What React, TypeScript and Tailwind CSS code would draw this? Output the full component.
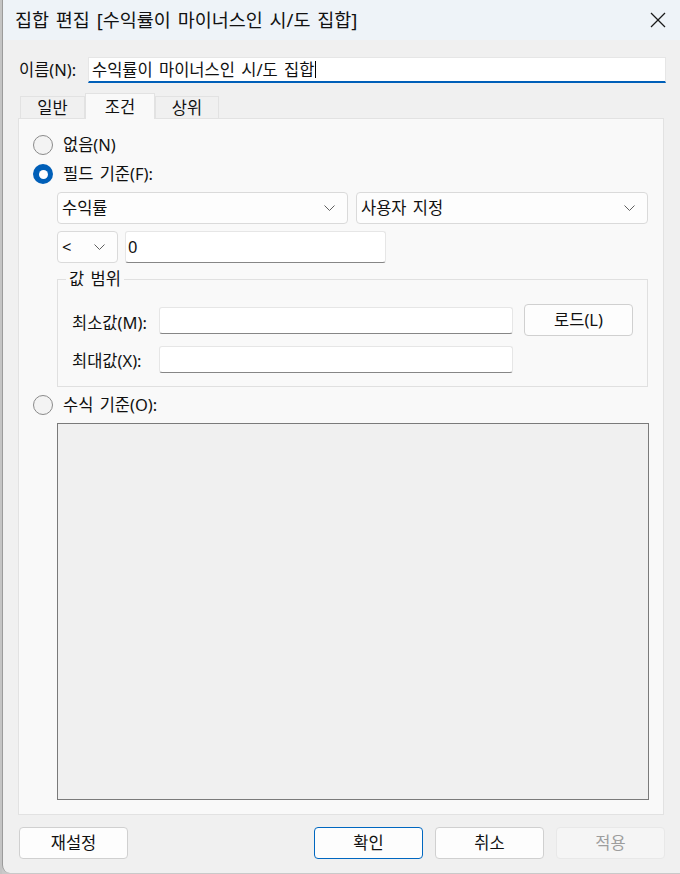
import React from "react";

const T = "text-[16.5px] leading-[20px] text-[#111] [word-spacing:2px]";

function Chevron() {
  return (
    <svg width="11" height="7" viewBox="0 0 11 7" className="shrink-0">
      <polyline points="0.5,0.5 5.5,5.5 10.5,0.5" fill="none" stroke="#5f5f5f" strokeWidth="1" />
    </svg>
  );
}

function Radio({ checked, label }: { checked?: boolean; label: string }) {
  return (
    <div className="flex items-center h-[24px]">
      {checked ? (
        <div className="w-[20px] h-[20px] rounded-full bg-[#005fb8] flex items-center justify-center shrink-0">
          <div className="w-[9px] h-[9px] rounded-full bg-white" />
        </div>
      ) : (
        <div className="w-[20px] h-[20px] rounded-full border border-[#8a8a8a] bg-[#f3f3f3] shrink-0" />
      )}
      <span className={`ml-[10px] ${T}`}>{label}</span>
    </div>
  );
}

function Combo({ text, w }: { text: string; w: string }) {
  return (
    <div
      className={`${w} h-[32px] bg-[#fdfdfd] border border-[#dadada] rounded-[4px] flex items-center justify-between pl-[4px] pr-[12px]`}
    >
      <span className={T}>{text}</span>
      <Chevron />
    </div>
  );
}

function Btn({ label, primary, disabled }: { label: string; primary?: boolean; disabled?: boolean }) {
  const cls = primary
    ? "border-[#0067c0] bg-[#fdfdfd]"
    : disabled
    ? "border-[#e8e8e8] bg-[#f5f5f5]"
    : "border-[#d0d0d0] bg-[#fdfdfd]";
  return (
    <div className={`w-[109px] h-[32px] rounded-[4px] border ${cls} flex items-center justify-center`}>
      <span className={disabled ? "text-[16.5px] leading-[20px] text-[#9d9d9d]" : T}>{label}</span>
    </div>
  );
}

export default function App() {
  return (
    <div className="w-[680px] h-[874px] flex bg-[#c9c9c9] overflow-hidden font-['Noto_Sans','Noto_Sans_CJK_KR',sans-serif]">
      <div className="w-[2px] shrink-0 bg-[#c4c4c4]" />
      <div className="flex-1 flex flex-col bg-[#f0f0f0] border-l border-[#9b9b9b] rounded-bl-[8px] h-[873px]">
        {/* title bar */}
        <div className="h-[40px] shrink-0 bg-[#eef3f8] flex items-center justify-between pl-[12px] pr-[15px]">
          <span className="text-[18.5px] leading-[22px] text-[#111] [word-spacing:2px]">집합 편집 [수익률이 마이너스인 시/도 집합]</span>
          <svg width="16" height="16" viewBox="0 0 16 16">
            <line x1="1" y1="1" x2="15" y2="15" stroke="#1a1a1a" strokeWidth="1.2" />
            <line x1="15" y1="1" x2="1" y2="15" stroke="#1a1a1a" strokeWidth="1.2" />
          </svg>
        </div>

        {/* name row */}
        <div className="flex items-center mt-[17px] pl-[16px] pr-[15px] h-[26px]">
          <span className={`w-[69px] shrink-0 ${T}`}>이름(N):</span>
          <div className="flex-1 h-[26px] bg-white border-t border-x border-[#e6e6e6] border-b-2 border-b-[#005fb8] flex items-center pl-[3px]">
            <span className={T}>수익률이 마이너스인 시/도 집합</span>
            <span className="w-px h-[17px] bg-black ml-px" />
          </div>
        </div>

        {/* tabs + panel */}
        <div className="flex flex-col pl-[15px] pr-[17px] mt-[10px]">
          <div className="flex items-end h-[25px] pl-[2px]">
            <div className="w-[65px] h-[22px] border border-b-0 border-[#e2e2e2] bg-[#f0f0f0] flex items-center justify-center">
              <span className={T}>일반</span>
            </div>
            <div className="w-[70px] h-[26px] -mb-px relative z-10 border border-b-0 border-[#e2e2e2] bg-[#f9f9f9] flex items-center justify-center">
              <span className={T}>조건</span>
            </div>
            <div className="w-[64px] h-[22px] border border-b-0 border-[#e2e2e2] bg-[#f0f0f0] flex items-center justify-center">
              <span className={T}>상위</span>
            </div>
          </div>
          <div className="h-[697px] border border-[#e2e2e2] bg-[#f9f9f9] flex flex-col pt-[14px] pl-[14px] pr-[14px]">
            <Radio label="없음(N)" />
            <div className="mt-[5px]">
              <Radio checked label="필드 기준(F):" />
            </div>
            <div className="pl-[24px] flex flex-col">
              <div className="flex mt-[6px] gap-[8px]">
                <Combo text="수익률" w="w-[291px]" />
                <Combo text="사용자 지정" w="w-[292px]" />
              </div>
              <div className="flex mt-[7px] gap-[7px]">
                <Combo text="<" w="w-[61px]" />
                <div className="w-[261px] h-[32px] bg-white border border-[#e6e6e6] border-b-[#868686] rounded-[3px] flex items-center pl-[2px]">
                  <span className={T}>0</span>
                </div>
              </div>
              {/* group box */}
              <div className="relative mt-[16px] w-[591px] h-[108px] border border-[#e0e0e0] pt-[24px] pl-[14px] flex flex-col">
                <span className={`absolute left-[8px] top-[-11px] px-[3px] bg-[#f9f9f9] ${T}`}>값 범위</span>
                <div className="flex items-center h-[32px]">
                  <span className={`w-[87px] shrink-0 mt-[6px] ${T}`}>최소값(M):</span>
                  <div className="w-[354px] h-[27px] bg-white border border-[#e6e6e6] border-b-[#868686] rounded-[3px]" />
                  <div className="ml-[11px]">
                    <Btn label="로드(L)" />
                  </div>
                </div>
                <div className="flex items-center mt-[10px] h-[27px]">
                  <span className={`w-[87px] shrink-0 mt-[2px] ${T}`}>최대값(X):</span>
                  <div className="w-[354px] h-[27px] bg-white border border-[#e6e6e6] border-b-[#868686] rounded-[3px]" />
                </div>
              </div>
            </div>
            <div className="mt-[6px]">
              <Radio label="수식 기준(O):" />
            </div>
            <div className="ml-[24px] mt-[6px] w-[592px] h-[377px] bg-[#f0f0f0] border border-[#7a7a7a]" />
          </div>
        </div>

        {/* buttons */}
        <div className="flex justify-between mt-[12px] pl-[16px] pr-[16px]">
          <Btn label="재설정" />
          <div className="flex gap-[12px]">
            <Btn label="확인" primary />
            <Btn label="취소" />
            <Btn label="적용" disabled />
          </div>
        </div>
      </div>
    </div>
  );
}
